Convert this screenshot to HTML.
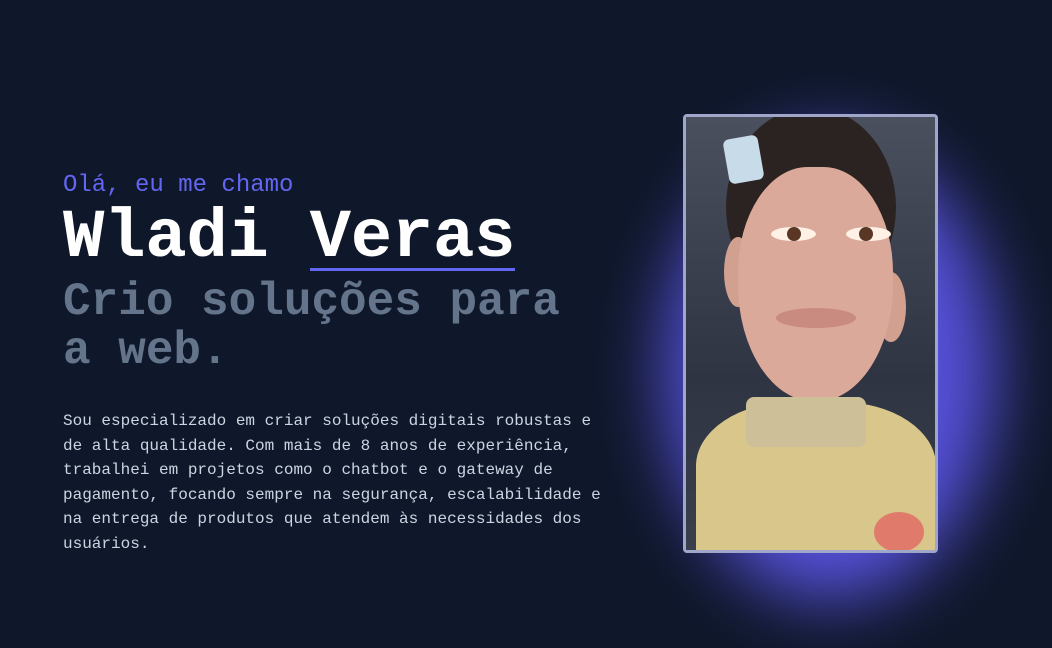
<!DOCTYPE html>
<html><head><meta charset="utf-8"><style>
body{margin:0;width:1052px;height:648px;background:#0f172a;overflow:hidden;font-family:"Liberation Mono",monospace;position:relative}
.t{position:absolute;left:63px;white-space:nowrap}
.hi{top:171px;font-size:24px;color:#6366f1;line-height:30px}
.nm{top:200px;font-size:69px;font-weight:bold;color:#fff;line-height:76px;letter-spacing:-0.3px}
.nm u{text-decoration:none;border-bottom:3px solid #6366f1;padding-bottom:0;display:inline-block;line-height:60px}
.sub{top:278px;font-size:46px;font-weight:bold;color:#64748b;line-height:49px}
.p{top:409px;font-size:16px;color:#cbd5e1;line-height:24.5px}
.glow{position:absolute;left:665px;top:140px;width:330px;height:460px;border-radius:50%;background:#5b55e6;filter:blur(35px);opacity:.95}
.frame{position:absolute;left:683px;top:114px;width:249px;height:433px;border:3px solid #9fa6c9;border-radius:4px;background:#3b4150;overflow:hidden}
</style></head><body>
<div class="glow"></div>
<div class="frame">
 <div style="position:absolute;left:0;top:0;width:249px;height:433px;background:linear-gradient(#4a505e,#2f3443 60%,#3a3f4c)"></div>
 <div style="position:absolute;left:40px;top:-10px;width:170px;height:200px;border-radius:50%;background:#2b2222"></div>
 <div style="position:absolute;left:38px;top:120px;width:28px;height:70px;border-radius:50%;background:#d2a08e"></div>
 <div style="position:absolute;left:190px;top:155px;width:30px;height:70px;border-radius:50%;background:#d2a08e"></div>
 <div style="position:absolute;left:52px;top:50px;width:155px;height:235px;border-radius:45% 45% 50% 50%;background:#dba999"></div>
 <div style="position:absolute;left:85px;top:110px;width:45px;height:14px;border-radius:50%;background:#fff1e6"></div>
 <div style="position:absolute;left:160px;top:110px;width:45px;height:14px;border-radius:50%;background:#fff1e6"></div>
 <div style="position:absolute;left:101px;top:110px;width:14px;height:14px;border-radius:50%;background:#5a3624"></div>
 <div style="position:absolute;left:173px;top:110px;width:14px;height:14px;border-radius:50%;background:#5a3624"></div>
 <div style="position:absolute;left:90px;top:191px;width:80px;height:20px;border-radius:50%;background:#c98a80"></div>
 <div style="position:absolute;left:40px;top:20px;width:35px;height:45px;border-radius:6px;background:#c8dbe8;transform:rotate(-10deg)"></div>
 <div style="position:absolute;left:10px;top:285px;width:240px;height:160px;border-radius:40% 40% 0 0;background:#d8c68a"></div>
 <div style="position:absolute;left:60px;top:280px;width:120px;height:50px;background:#cdbf98;border-radius:8px"></div>
 <div style="position:absolute;left:188px;top:395px;width:50px;height:40px;border-radius:50%;background:#e07a6a"></div>
</div>
<div class="t hi">Olá, eu me chamo</div>
<div class="t nm">Wladi <u>Veras</u></div>
<div class="t sub">Crio soluções para<br>a web.</div>
<div class="t p">Sou especializado em criar soluções digitais robustas e<br>de alta qualidade. Com mais de 8 anos de experiência,<br>trabalhei em projetos como o chatbot e o gateway de<br>pagamento, focando sempre na segurança, escalabilidade e<br>na entrega de produtos que atendem às necessidades dos<br>usuários.</div>
</body></html>
